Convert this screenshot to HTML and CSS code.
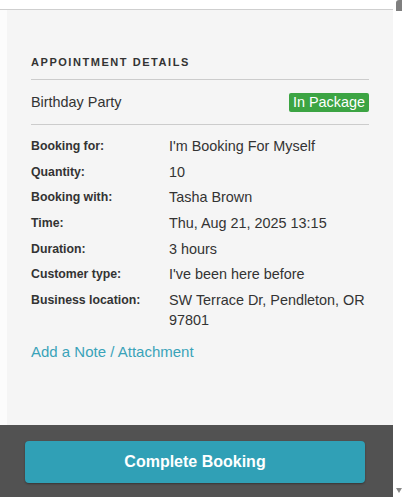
FILE: index.html
```html
<!DOCTYPE html>
<html>
<head>
<meta charset="utf-8">
<link rel="stylesheet" href="styles.css">
</head>
<body>
<div class="frame">
  <div class="page">
    <div class="topbar"></div>
    <div class="content">
      <div class="gutter"></div>
      <section class="panel">
        <h2 class="heading">APPOINTMENT DETAILS</h2>
        <div class="service">
          <span class="service-name">Birthday Party</span>
          <span class="badge">In Package</span>
        </div>
        <dl class="details">
          <div class="row"><dt>Booking for:</dt><dd>I'm Booking For Myself</dd></div>
          <div class="row"><dt>Quantity:</dt><dd>10</dd></div>
          <div class="row"><dt>Booking with:</dt><dd>Tasha Brown</dd></div>
          <div class="row"><dt>Time:</dt><dd>Thu, Aug 21, 2025 13:15</dd></div>
          <div class="row"><dt>Duration:</dt><dd>3 hours</dd></div>
          <div class="row"><dt>Customer type:</dt><dd>I've been here before</dd></div>
          <div class="row"><dt>Business location:</dt><dd>SW Terrace Dr, Pendleton, OR 97801</dd></div>
        </dl>
        <a class="note-link" href="#">Add a Note / Attachment</a>
      </section>
    </div>
    <footer class="footer">
      <button class="complete-btn">Complete Booking</button>
    </footer>
  </div>
  <div class="scrollbar">
    <div class="thumb"></div>
    <div class="arrow"></div>
  </div>
</div>
</body>
</html>
```

FILE: styles.css
```css
html, body {
  margin: 0;
  padding: 0;
  background: #ffffff;
  font-family: "Liberation Sans", Arial, sans-serif;
  color: #333333;
}

.frame {
  display: flex;
  width: 402px;
  height: 497px;
  overflow: hidden;
}

.page {
  width: 393px;
  display: flex;
  flex-direction: column;
}

.topbar {
  height: 9px;
  border-bottom: 1px solid #cfcfcf;
  background: #ffffff;
}

.content {
  flex: 1;
  display: flex;
}

.gutter {
  width: 7px;
  background: #fcfcfc;
}

.panel {
  flex: 1;
  background: #f5f5f5;
  padding: 44px 24px 0 24px;
}

.heading {
  margin: 0;
  font-size: 11px;
  line-height: 16px;
  font-weight: bold;
  letter-spacing: 1.55px;
  color: #333333;
  padding-bottom: 9px;
  border-bottom: 1px solid #cccccc;
}

.service {
  display: flex;
  justify-content: space-between;
  align-items: center;
  height: 44px;
  border-bottom: 1px solid #cccccc;
  font-size: 14.4px;
}

.service-name {
  color: #333333;
}

.badge {
  background: #3ca443;
  color: #ffffff;
  font-size: 14.4px;
  line-height: 19px;
  padding: 0 4px;
  border-radius: 2px;
}

.details {
  margin: 11px 0 0 0;
  display: flex;
  flex-direction: column;
  gap: 5.67px;
}

.row {
  display: grid;
  grid-template-columns: 138px 1fr;
  line-height: 20px;
}

.row dt {
  font-size: 12.3px;
  font-weight: bold;
  color: #333333;
}

.row dd {
  margin: 0;
  font-size: 14.4px;
  color: #333333;
}

.note-link {
  display: block;
  margin-top: 12px;
  line-height: 20px;
  font-size: 15px;
  color: #3aa3b9;
  text-decoration: none;
}

.footer {
  height: 72px;
  background: #525252;
  display: flex;
  align-items: flex-start;
  padding: 16px 28px 0 25px;
  box-sizing: border-box;
}

.complete-btn {
  width: 100%;
  height: 42px;
  border: none;
  border-radius: 4px;
  background: #30a0b6;
  color: #ffffff;
  font-family: "Liberation Sans", Arial, sans-serif;
  font-size: 16px;
  font-weight: bold;
  box-shadow: 0 1px 2px rgba(0, 0, 0, 0.35);
}

.scrollbar {
  width: 9px;
  background: #ffffff;
  display: flex;
  flex-direction: column;
  justify-content: space-between;
  align-items: flex-end;
}

.thumb {
  width: 6px;
  height: 11px;
  background: #7f7f7f;
  border-radius: 3px 0 0 0;
}

.arrow {
  width: 0;
  height: 0;
  margin-bottom: 4px;
  border-left: 3px solid transparent;
  border-right: 3px solid transparent;
  border-top: 5px solid #8a8a8a;
}
```
